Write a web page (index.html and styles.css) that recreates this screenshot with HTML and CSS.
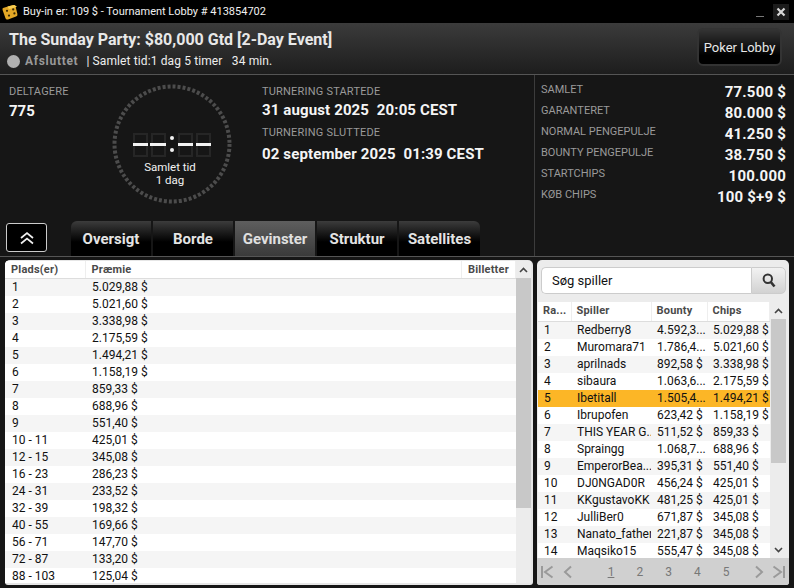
FILE: index.html
```html
<!DOCTYPE html>
<html lang="da">
<head>
    <meta charset="UTF-8">
    <title>Tournament Lobby</title>
    <link rel="stylesheet" href="styles.css">
</head>
<body>
    <div class="titlebar">
        <svg class="logo" width="16" height="16" viewBox="0 0 16 16">
            <path d="M1 4 L11 1 Q13 .6 13.6 2.500 L15.400 10 Q15.800 12 14 12.600 L6 15.400 Q4 16 3.400 14 L.6 6 Q.2 4.400 1 4Z" fill="#e2a726"/>
            <path d="M5.500 2.600 L12.500 .9 L15 2.800 L7 5.200Z" fill="#f7cd52"/>
            <circle cx="5" cy="6.800" r="1.100" fill="#3a2a05"/>
            <circle cx="7" cy="11.600" r="1.100" fill="#3a2a05"/>
            <circle cx="11.200" cy="5.400" r="1.100" fill="#3a2a05"/>
            <circle cx="12.400" cy="9.400" r="1.100" fill="#3a2a05"/>
        </svg>
        <span class="titlebar-text">Buy-in er: 109 $ - Tournament Lobby # 413854702</span>
        <span class="win-min"></span>
        <span class="win-close">
            <svg width="10" height="10" viewBox="0 0 10 10"><path d="M1.500 1.500 L8.500 8.500 M8.500 1.500 L1.500 8.500" stroke="#d8d8d8" stroke-width="2.200"/></svg>
        </span>
    </div>

    <div class="header">
        <div>
            <h1>The Sunday Party: $80,000 Gtd [2-Day Event]</h1>
            <div class="status">
                <span class="status-dot"></span>
                <span class="status-label">Afsluttet</span>
                <span class="status-text">| Samlet tid:1 dag 5 timer &nbsp; 34 min.</span>
            </div>
        </div>
        <button class="lobby-btn">Poker Lobby</button>
    </div>

    <div class="info">
        <div class="info-main">
            <div class="info-top">
                <div class="players">
                    <div class="label">DELTAGERE</div>
                    <div class="big">775</div>
                </div>
                <div class="clock">
                    <svg class="clock-art" width="120" height="120" viewBox="0 0 120 120">
                        <circle cx="60" cy="60" r="57.500" fill="none" stroke="#4c4c4c" stroke-width="4" stroke-dasharray="3 2.020"/>
                        <g fill="none" stroke="#262626" stroke-width="2">
                            <path d="M22 50 H35 V72 H22Z M22 61 H35"/>
                            <path d="M40 50 H53 V72 H40Z M40 61 H53"/>
                            <path d="M67 50 H80 V72 H67Z M67 61 H80"/>
                            <path d="M85 50 H98 V72 H85Z M85 61 H98"/>
                        </g>
                        <g fill="#f2f2f2">
                            <rect x="21" y="59" width="15" height="3"/><rect x="38" y="59" width="16" height="3"/>
                            <rect x="66" y="59" width="15" height="3"/><rect x="84" y="59" width="15" height="3"/>
                            <circle cx="60" cy="54" r="2"/><circle cx="60" cy="66" r="2"/>
                        </g>
                    </svg>
                    <div class="clock-text">Samlet tid<br>1 dag</div>
                </div>
                <div class="dates">
                    <div class="label">TURNERING STARTEDE</div>
                    <div class="date">31 august 2025 &nbsp;20:05 CEST</div>
                    <div class="label label-end">TURNERING SLUTTEDE</div>
                    <div class="date">02 september 2025 &nbsp;01:39 CEST</div>
                </div>
            </div>
            <div class="nav">
                <button class="collapse-btn">
                    <svg width="16" height="14" viewBox="0 0 16 14"><path d="M2 7 L8 2 L14 7 M2 12.500 L8 7.500 L14 12.500" fill="none" stroke="#f0f0f0" stroke-width="1.700"/></svg>
                </button>
                <div class="tabs">
                    <div class="tab">Oversigt</div>
                    <div class="tab">Borde</div>
                    <div class="tab active">Gevinster</div>
                    <div class="tab">Struktur</div>
                    <div class="tab">Satellites</div>
                </div>
            </div>
        </div>
        <div class="stats">
            <div class="stat"><span class="label">SAMLET</span><b>77.500 $</b></div>
            <div class="stat"><span class="label">GARANTERET</span><b>80.000 $</b></div>
            <div class="stat"><span class="label">NORMAL PENGEPULJE</span><b>41.250 $</b></div>
            <div class="stat"><span class="label">BOUNTY PENGEPULJE</span><b>38.750 $</b></div>
            <div class="stat"><span class="label">STARTCHIPS</span><b>100.000</b></div>
            <div class="stat"><span class="label">KØB CHIPS</span><b>100 $+9 $</b></div>
        </div>
    </div>

    <div class="content">
        <div class="panel panel-prizes">
            <div class="table-wrap">
                <table class="prizes">
                    <thead>
                        <tr><th class="col-place">Plads(er)</th><th>Præmie</th><th class="col-tickets">Billetter</th></tr>
                    </thead>
                    <tbody>
                        <tr><td>1</td><td>5.029,88 $</td><td></td></tr>
                        <tr><td>2</td><td>5.021,60 $</td><td></td></tr>
                        <tr><td>3</td><td>3.338,98 $</td><td></td></tr>
                        <tr><td>4</td><td>2.175,59 $</td><td></td></tr>
                        <tr><td>5</td><td>1.494,21 $</td><td></td></tr>
                        <tr><td>6</td><td>1.158,19 $</td><td></td></tr>
                        <tr><td>7</td><td>859,33 $</td><td></td></tr>
                        <tr><td>8</td><td>688,96 $</td><td></td></tr>
                        <tr><td>9</td><td>551,40 $</td><td></td></tr>
                        <tr><td>10 - 11</td><td>425,01 $</td><td></td></tr>
                        <tr><td>12 - 15</td><td>345,08 $</td><td></td></tr>
                        <tr><td>16 - 23</td><td>286,23 $</td><td></td></tr>
                        <tr><td>24 - 31</td><td>233,52 $</td><td></td></tr>
                        <tr><td>32 - 39</td><td>198,32 $</td><td></td></tr>
                        <tr><td>40 - 55</td><td>169,66 $</td><td></td></tr>
                        <tr><td>56 - 71</td><td>147,70 $</td><td></td></tr>
                        <tr><td>72 - 87</td><td>133,20 $</td><td></td></tr>
                        <tr><td>88 - 103</td><td>125,04 $</td><td></td></tr>
                    </tbody>
                </table>
            </div>
            <div class="scrollbar">
                <div class="scroll-up">
                    <svg width="9" height="6" viewBox="0 0 9 6"><path d="M1 5 L4.500 1.500 L8 5" fill="none" stroke="#444" stroke-width="1.600"/></svg>
                </div>
                <div class="thumb thumb-prizes"></div>
            </div>
        </div>

        <div class="panel panel-players">
            <div class="search">
                <div class="search-input">Søg spiller</div>
                <div class="search-btn">
                    <svg width="14" height="15" viewBox="0 0 14 15"><circle cx="5.800" cy="5.800" r="4.200" fill="none" stroke="#333" stroke-width="2"/><path d="M9 9.200 L12.500 13.500" stroke="#333" stroke-width="2.600"/></svg>
                </div>
            </div>
            <div class="players-body">
                <table class="ranking">
                    <thead>
                        <tr><th class="col-rank">Ra...</th><th class="col-name">Spiller</th><th class="col-bounty">Bounty</th><th class="col-chips">Chips</th></tr>
                    </thead>
                    <tbody>
                        <tr><td>1</td><td>Redberry8</td><td>4.592,3...</td><td>5.029,88 $</td></tr>
                        <tr><td>2</td><td>Muromara71</td><td>1.786,4...</td><td>5.021,60 $</td></tr>
                        <tr><td>3</td><td>aprilnads</td><td>892,58 $</td><td>3.338,98 $</td></tr>
                        <tr><td>4</td><td>sibaura</td><td>1.063,6...</td><td>2.175,59 $</td></tr>
                        <tr class="me"><td>5</td><td>Ibetitall</td><td>1.505,4...</td><td>1.494,21 $</td></tr>
                        <tr><td>6</td><td>Ibrupofen</td><td>623,42 $</td><td>1.158,19 $</td></tr>
                        <tr><td>7</td><td>THIS YEAR G...</td><td>511,52 $</td><td>859,33 $</td></tr>
                        <tr><td>8</td><td>Spraingg</td><td>1.068,7...</td><td>688,96 $</td></tr>
                        <tr><td>9</td><td>EmperorBea...</td><td>395,31 $</td><td>551,40 $</td></tr>
                        <tr><td>10</td><td>DJ0NGAD0R</td><td>456,24 $</td><td>425,01 $</td></tr>
                        <tr><td>11</td><td>KKgustavoKK</td><td>481,25 $</td><td>425,01 $</td></tr>
                        <tr><td>12</td><td>JulliBer0</td><td>671,87 $</td><td>345,08 $</td></tr>
                        <tr><td>13</td><td>Nanato_father</td><td>221,87 $</td><td>345,08 $</td></tr>
                        <tr><td>14</td><td>Maqsiko15</td><td>555,47 $</td><td>345,08 $</td></tr>
                    </tbody>
                </table>
                <div class="scrollbar scrollbar-players">
                    <div class="scroll-up">
                        <svg width="9" height="6" viewBox="0 0 9 6"><path d="M1 5 L4.500 1.500 L8 5" fill="none" stroke="#444" stroke-width="1.600"/></svg>
                    </div>
                    <div class="thumb thumb-players"></div>
                    <div class="scroll-down">
                        <svg width="9" height="6" viewBox="0 0 9 6"><path d="M1 1 L4.500 4.500 L8 1" fill="none" stroke="#444" stroke-width="1.600"/></svg>
                    </div>
                </div>
            </div>
            <div class="pager">
                <svg width="14" height="14" viewBox="0 0 14 14"><path d="M2 1 V13 M12.500 1.500 L5 7 L12.500 12.500" fill="none" stroke="#9a9a9a" stroke-width="2"/></svg>
                <svg class="pager-prev" width="10" height="14" viewBox="0 0 10 14"><path d="M8 1.500 L2 7 L8 12.500" fill="none" stroke="#9a9a9a" stroke-width="2"/></svg>
                <div class="pages">
                    <span class="page current">1</span>
                    <span class="page">2</span>
                    <span class="page">3</span>
                    <span class="page">4</span>
                    <span class="page">5</span>
                </div>
                <svg class="pager-next" width="10" height="14" viewBox="0 0 10 14"><path d="M2 1.500 L8 7 L2 12.500" fill="none" stroke="#9a9a9a" stroke-width="2"/></svg>
                <svg width="14" height="14" viewBox="0 0 14 14"><path d="M12 1 V13 M1.500 1.500 L9 7 L1.500 12.500" fill="none" stroke="#9a9a9a" stroke-width="2"/></svg>
            </div>
        </div>
    </div>
</body>
</html>
```

FILE: styles.css
```css
* { box-sizing: border-box; }
html, body { margin: 0; height: 588px; overflow: hidden; }
body { font-family: Roboto, "Liberation Sans", sans-serif; background: #161616; color: #fff; width: 794px; }

.titlebar { height: 23px; background: #000; display: flex; align-items: center; padding: 0 5px 0 2px; }
.logo { margin-right: 5px; }
.titlebar-text { font-size: 11px; color: #f0f0f0; flex: 1; }
.win-min { width: 8px; height: 1px; background: #777; margin: 10px 9px 0 0; }
.win-close { width: 16px; height: 16px; background: #1c1c1c; display: flex; align-items: center; justify-content: center; }

.header { height: 52px; background: linear-gradient(#3b3b3b, #1d1d1d); border-bottom: 1px solid #555; display: flex; justify-content: space-between; padding: 7px 12px 0 9px; }
h1 { margin: 0; font-size: 16px; font-weight: 700; color: #e8e8e8; line-height: 20px; }
.status { display: flex; align-items: center; margin: 3px 0 0 -2px; height: 16px; }
.status-dot { width: 13px; height: 13px; border-radius: 50%; background: #b0b0b0; margin-right: 5px; }
.status-label { font-size: 12px; font-weight: 700; color: #999; letter-spacing: .7px; margin-right: 8px; }
.status-text { font-size: 12px; color: #eee; letter-spacing: .12px; }
.lobby-btn { width: 85px; height: 38px; margin-top: -2px; border: 2px solid #333; border-radius: 6px; background: linear-gradient(#333, #000 75%); color: #e8e8e8; font: 13px Roboto, sans-serif; padding: 0; }

.info { height: 181px; display: flex; }
.info-main { width: 535px; border-right: 1px solid #3c3c3c; }
.info-top { height: 146px; display: flex; }
.label { font-size: 11px; color: #9a9a9a; letter-spacing: .2px; line-height: 13px; }
.big { font-size: 15px; font-weight: 700; margin-top: 4px; color: #f5f5f5; }
.players { width: 101px; padding: 10px 0 0 9px; }
.clock { position: relative; width: 120px; height: 120px; margin: 9px 30px 0 11px; flex: none; }
.clock-art { position: absolute; left: 0; top: 0; }
.clock-text { position: absolute; left: 0; right: 4px; top: 77px; text-align: center; font-size: 11.500px; line-height: 13px; color: #f2f2f2; }
.dates { padding-top: 10px; }
.date { font-size: 15px; font-weight: 700; margin-top: 4px; color: #f5f5f5; line-height: 17px; letter-spacing: .13px; }
.label-end { margin-top: 7px; }
.label-end + .date { margin-top: 7px; }

.nav { display: flex; align-items: flex-start; }
.collapse-btn { width: 41px; height: 29px; margin: 2px 0 0 6px; background: #000; border: 1px solid #ccc; border-radius: 3px; padding: 0; display: flex; align-items: center; justify-content: center; }
.tabs { display: flex; gap: 2px; margin-left: 24px; }
.tab { width: 80px; height: 35px; padding-top: 9px; background: linear-gradient(#3c3c3c, #000 60%); text-align: center; font-size: 15px; font-weight: 700; color: #e4e4e4; }
.tab:first-child { border-top-left-radius: 6px; }
.tab:last-child { border-top-right-radius: 6px; width: 81px; }
.tab.active { background: linear-gradient(#5e5e5e, #3a3a3a); color: #e0e0e0; }

.stats { flex: 1; padding: 6px 8px 0 6px; }
.stat { display: flex; justify-content: space-between; align-items: center; height: 21px; }
.stat .label { padding-bottom: 4px; letter-spacing: 0; }
.stat b { font-size: 15px; font-weight: 700; color: #f5f5f5; letter-spacing: .2px; }

.content { height: 332px; border-top: 1px solid #555; display: flex; padding: 3px 5px 0 5px; gap: 4px; background: #161616; }
.panel { background: #ececec; border-radius: 5px 5px 3px 3px; height: 325px; overflow: hidden; color: #111; }
.panel-prizes { width: 528px; display: flex; padding: 1px 0 2px 0; background: #e6e6e6; }
.panel-players { width: 252px; }

table { border-collapse: collapse; table-layout: fixed; font-size: 12px; }
th { height: 17px; padding: 0 0 0 6px; text-align: left; font-size: 11px; letter-spacing: .2px; font-weight: 700; color: #4a4a4a; background: #fff; border-bottom: 1px solid #ddd; border-right: 1px solid #eee; }
td { height: 17px; padding: 0 0 0 7px; white-space: nowrap; overflow: hidden; line-height: 17px; }
tbody tr:nth-child(odd) td { background: #f5f5f5; }
tbody tr:nth-child(even) td { background: #fff; }
tbody tr.me:nth-child(odd) td { background: #fcb626; }

.table-wrap { width: 511px; height: 322px; overflow: hidden; background: #fff; }
.prizes { width: 511px; }
.col-place { width: 80px; }
.col-tickets { width: 54px; }

.scrollbar { width: 15px; background: #ececec; flex: none; }
.scroll-up, .scroll-down { height: 17px; display: flex; align-items: center; justify-content: center; }
.thumb { background: #c8c8c8; }
.thumb-prizes { height: 230px; }

.search { display: flex; padding: 7px 3px 8px 4px; }
.search-input { width: 210px; height: 27px; background: #fff; border: 1px solid #ccc; border-right: 0; border-radius: 5px 0 0 5px; font-size: 13px; line-height: 25px; padding-left: 10px; }
.search-btn { width: 35px; height: 27px; background: linear-gradient(#f2f2f2, #d2d2d2); border: 1px solid #ccc; border-radius: 0 5px 5px 0; display: flex; align-items: center; justify-content: center; }

.players-body { display: flex; height: 256px; padding-left: 1px; overflow: hidden; }
.ranking { width: 232px; align-self: flex-start; }
.ranking th { height: 19px; padding: 0 0 2px 5px; }
.col-rank { width: 33px; }
.col-name { width: 80px; }
.col-bounty { width: 56px; }
.ranking td { padding-left: 6px; }
.scrollbar-players { margin-left: 1px; display: flex; flex-direction: column; height: 256px; }
.thumb-players { height: 144px; }
.scroll-down { margin-top: auto; }

.pager { height: 27px; background: #d0d0d0; display: flex; align-items: center; padding: 0 3px; }
.pager-prev { margin-left: 9px; }
.pager-next { margin-right: 8px; }
.pages { flex: 1; display: flex; justify-content: center; gap: 22px; padding-left: 10px; }
.page { font-size: 12px; color: #777; }
.page.current { text-decoration: underline; }
```
